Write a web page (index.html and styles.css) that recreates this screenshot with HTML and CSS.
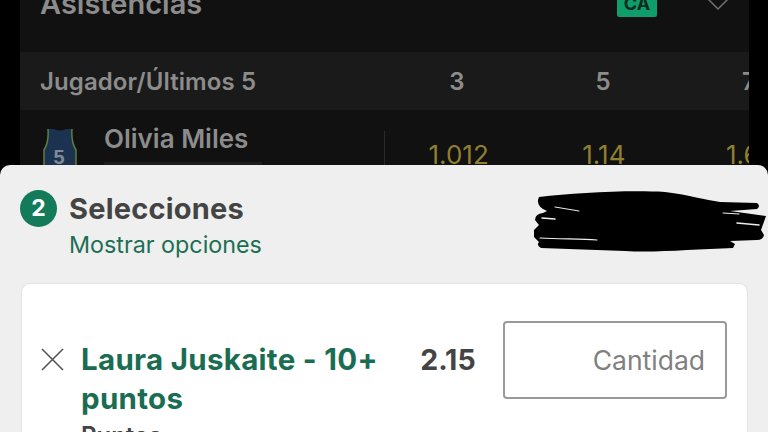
FILE: index.html
```html
<!DOCTYPE html>
<html lang="es">
<head>
<meta charset="utf-8">
<title>Selecciones</title>
<link rel="stylesheet" href="styles.css">
</head>
<body>
<main class="screen">
  <section class="market">
    <header class="market-head">
      <h2 class="market-title">Asistencias</h2>
      <span class="ca-badge">CA</span>
      <svg class="chev" width="24" height="14" viewBox="0 0 24 14"><path d="M2 1 L12 11 L22 1" fill="none" stroke="#6f6f6f" stroke-width="1.5"/></svg>
    </header>
    <div class="table-head">
      <span class="col-player">Jugador/Últimos 5</span>
      <span class="col-num">3</span>
      <span class="col-num">5</span>
      <span class="col-cut">7</span>
    </div>
    <div class="player-row">
      <svg class="jersey" width="36" height="50" viewBox="0 0 36 50">
        <path d="M6 1 H12 Q18 4 24 1 H30 Q29 14 34 22 V50 H2 V22 Q7 14 6 1 Z" fill="#1b3350"/>
        <path d="M6 1 Q7 14 2 22 V50 M30 1 Q29 14 34 22 V50" fill="none" stroke="#5f7f3e" stroke-width="1.5"/>
        <text x="17" y="36" class="jersey-num" text-anchor="middle">5</text>
      </svg>
      <div class="player-name">
        <span>Olivia Miles</span>
        <span class="player-sub"></span>
      </div>
      <span class="divider"></span>
      <span class="odd odd-a">1.012</span>
      <span class="odd odd-b">1.14</span>
      <span class="odd odd-c">1.6</span>
    </div>
  </section>

  <section class="sheet">
    <div class="sheet-head">
      <span class="count">2</span>
      <h1 class="sheet-title">Selecciones</h1>
    </div>
    <a class="options">Mostrar opciones</a>
    <svg class="scribble" width="243" height="70" viewBox="0 0 243 70">
      <path d="M14 12 C50 8 100 5 140 7 C165 10 180 15 195 17 L232 18 Q236 21 232 24 L205 26 L241 31 L236 45 L239 50 Q238 55 232 55 L205 56 L210 59 L208 63 C170 64 130 68 100 66 L16 63 Q11 60 14 57 L9 52 L9 45 L14 40 L10 35 Q10 29 18 28 L22 26 Q12 22 13 15 Z" fill="#000"/>
      <g fill="none" stroke="#eee" stroke-linecap="round">
        <path d="M17 33 L30 34" stroke-width="1.5"/>
        <path d="M15 53 C35 54 55 54 72 55" stroke-width="1.2"/>
        <path d="M30 22 C38 23 46 25 54 26" stroke-width="1"/>
        <path d="M212 38 L234 40" stroke-width="1.5"/>
        <path d="M198 28 L214 29" stroke-width="1"/>
      </g>
    </svg>
    <article class="card">
      <svg class="close" width="24" height="24" viewBox="0 0 24 24"><path d="M1 2 L22 23 M22 2 L1 23" fill="none" stroke="#555" stroke-width="1.6"/></svg>
      <div class="bet">
        <h3 class="bet-name">Laura Juskaite - 10+ puntos</h3>
        <p class="bet-sub">Puntos</p>
      </div>
      <span class="price">2.15</span>
      <div class="stake">Cantidad</div>
    </article>
  </section>
</main>
</body>
</html>
```
FILE: styles.css
```css
* { box-sizing: border-box; }
html, body { margin: 0; padding: 0; background: #000; }
body { width: 768px; height: 432px; overflow: hidden; font-family: Inter, "Liberation Sans", sans-serif; }
.screen { position: relative; width: 768px; height: 432px; overflow: hidden; background: #000; }

.market { width: 729px; height: 165px; margin-left: 20px; background: #111; overflow: hidden; }
.market-head { display: flex; align-items: center; height: 68px; margin-top: -16px; padding: 0 0 26px 20px; }
.market-title { margin: 0 0 3px; font-size: 29px; font-weight: 600; color: #8c8c8c; line-height: 30px; flex: 1; }
.ca-badge { width: 40px; height: 24px; margin-right: 49px; background: #0f9d6c; color: #0c2b20; border-radius: 2px; font-size: 18px; font-weight: 700; text-align: center; line-height: 22px; }
.chev { margin-right: 19px; }

.table-head { display: flex; align-items: center; height: 58px; background: #1a1a1a; color: #8c8c8c; font-size: 24px; font-weight: 600; letter-spacing: 0.1px; padding-left: 20px; }
.col-player { width: 344px; white-space: nowrap; }
.col-num { width: 146px; text-align: center; }
.col-cut { width: 73px; padding-left: 66px; overflow: hidden; white-space: nowrap; }

.player-row { display: flex; align-items: flex-start; height: 55px; padding-left: 22px; }
.jersey { margin-top: 18px; flex: none; }
.jersey-num { font-family: "Liberation Sans", sans-serif; font-size: 20px; font-weight: 700; fill: #7f8a96; }
.player-name { margin-left: 26px; width: 280px; padding-top: 14px; font-size: 26px; font-weight: 600; color: #8c8c8c; line-height: 30px; display: flex; flex-direction: column; }
.player-sub { width: 158px; height: 10px; margin-top: 8px; background: #1d1d1d; }
.divider { width: 1px; height: 40px; margin-top: 21px; background: #2a2a2a; }
.odd { font-size: 26px; color: #8f7f2e; padding-top: 30px; line-height: 30px; white-space: nowrap; }
.odd-a { margin-left: 44px; width: 154px; }
.odd-b { width: 144px; }
.odd-c { width: 23px; overflow: hidden; }

.sheet { position: absolute; left: 0; top: 165px; width: 768px; height: 267px; background: #efefef; border-radius: 10px 10px 0 0; padding: 24px 20px 0; }
.sheet-head { display: flex; align-items: center; gap: 12px; height: 38px; }
.count { width: 37px; height: 37px; border-radius: 50%; background: #137a5a; color: #fff; font-size: 23px; font-weight: 700; text-align: center; line-height: 37px; }
.sheet-title { margin: 0; font-size: 29px; font-weight: 700; letter-spacing: 0.2px; color: #444; }
.options { display: block; margin: 4px 0 0 49px; font-size: 23.3px; line-height: 28px; color: #1c6f54; }
.scribble { position: absolute; left: 525px; top: 20px; }

.card { display: flex; align-items: flex-start; width: 727px; height: 200px; margin: 24px 0 0 1px; padding: 37px 20px 0 19px; background: #fff; border: 1px solid #e3e3e3; border-radius: 9px; }
.close { flex: none; margin-top: 26px; }
.bet { width: 340px; margin-left: 16px; padding-top: 19px; }
.bet-name { margin: 0; font-size: 29.5px; font-weight: 700; letter-spacing: 0.3px; line-height: 39px; color: #1a6d52; }
.bet-sub { margin: 3px 0 0; font-size: 24px; font-weight: 600; color: #444; }
.price { width: 83px; padding-top: 23px; font-size: 28.5px; font-weight: 700; color: #444; line-height: 32px; }
.stake { flex: none; width: 224px; height: 78px; border: 2px solid #999; border-radius: 4px; font-size: 26.5px; line-height: 74px; text-align: right; padding-right: 20px; color: #808080; }
```
